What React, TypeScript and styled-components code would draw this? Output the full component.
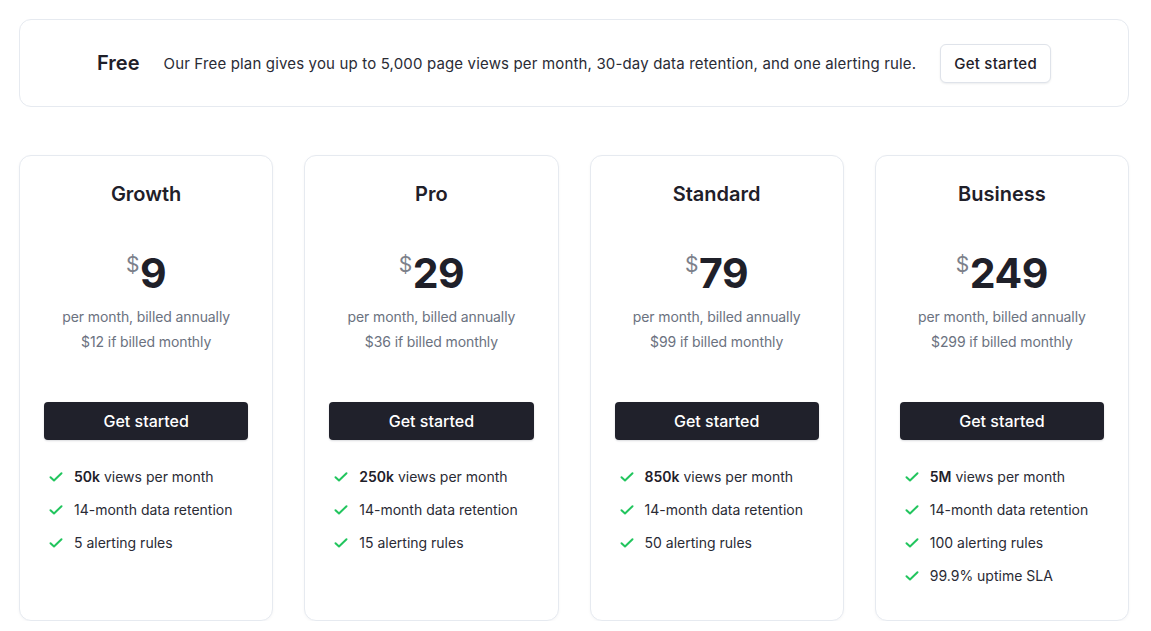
import React from 'react';
import styled, { createGlobalStyle } from 'styled-components';

interface Plan {
  name: string;
  price: number;
  monthly: number;
  views: string;
  rules: number;
  sla?: boolean;
}

const plans: Plan[] = [
  { name: 'Growth', price: 9, monthly: 12, views: '50k', rules: 5 },
  { name: 'Pro', price: 29, monthly: 36, views: '250k', rules: 15 },
  { name: 'Standard', price: 79, monthly: 99, views: '850k', rules: 50 },
  { name: 'Business', price: 249, monthly: 299, views: '5M', rules: 100, sla: true },
];

const GlobalStyle = createGlobalStyle`
  body {
    margin: 0;
    background: #ffffff;
    font-family: Inter, "Noto Sans", "Liberation Sans", sans-serif;
    color: #1f2029;
    -webkit-font-smoothing: antialiased;
  }
  * { box-sizing: border-box; }
`;

function Check() {
  return (
    <CheckIcon width="14" height="14" viewBox="0 0 14 14" fill="none">
      <path d="M1.5 7.2 L5 10.5 L12.5 3.2" stroke="#22c55e" strokeWidth="2" strokeLinecap="round" strokeLinejoin="round" />
    </CheckIcon>
  );
}

export default function App() {
  return (
    <Page>
      <GlobalStyle />
      <Banner>
        <BannerTitle>Free</BannerTitle>
        <BannerText>
          Our Free plan gives you up to 5,000 page views per month, 30-day data retention, and one alerting rule.
        </BannerText>
        <OutlineButton>Get started</OutlineButton>
      </Banner>

      <Grid>
        {plans.map((plan) => (
          <Card key={plan.name}>
            <PlanName>{plan.name}</PlanName>
            <Price>
              <Currency>$</Currency>
              {plan.price}
            </Price>
            <Billing>per month, billed annually</Billing>
            <Billing>${plan.monthly} if billed monthly</Billing>
            <DarkButton>Get started</DarkButton>
            <Features>
              <Feature>
                <Check />
                <span>
                  <strong>{plan.views}</strong> views per month
                </span>
              </Feature>
              <Feature>
                <Check />
                <span>14-month data retention</span>
              </Feature>
              <Feature>
                <Check />
                <span>{plan.rules} alerting rules</span>
              </Feature>
              {plan.sla && (
                <Feature>
                  <Check />
                  <span>99.9% uptime SLA</span>
                </Feature>
              )}
            </Features>
          </Card>
        ))}
      </Grid>
    </Page>
  );
}

const Page = styled.div`
  width: 1110px;
  margin-left: 19px;
  padding-top: 19px;
`;

const Banner = styled.section`
  display: flex;
  align-items: center;
  justify-content: center;
  gap: 24px;
  height: 88px;
  border: 1px solid #e6eaf0;
  border-radius: 12px;
  background: #fff;
`;

const BannerTitle = styled.h2`
  margin: 0;
  font-size: 20px;
  font-weight: 600;
  color: #1f2029;
`;

const BannerText = styled.p`
  margin: 0;
  font-size: 15px;
  letter-spacing: 0.16px;
  color: #2a2b35;
`;

const OutlineButton = styled.button`
  font-family: inherit;
  font-size: 15px;
  letter-spacing: 0.25px;
  font-weight: 500;
  color: #1f2029;
  background: #fff;
  border: 1px solid #dfe3ea;
  border-radius: 6px;
  height: 39px;
  padding: 0 13px;
  box-shadow: 0 1px 2px rgba(15, 23, 42, 0.08);
`;

const Grid = styled.div`
  display: grid;
  grid-template-columns: repeat(4, 1fr);
  gap: 31px;
  margin-top: 48px;
`;

const Card = styled.div`
  display: flex;
  flex-direction: column;
  align-items: center;
  height: 466px;
  padding: 24px 24px 0;
  border: 1px solid #e6eaf0;
  border-radius: 12px;
  background: #fff;
  box-shadow: 0 1px 3px rgba(15, 23, 42, 0.04);
`;

const PlanName = styled.h3`
  margin: 0;
  font-size: 20px;
  line-height: 28px;
  font-weight: 600;
  color: #1f2029;
`;

const Price = styled.div`
  display: flex;
  align-items: flex-start;
  margin-top: 41px;
  font-size: 41px;
  line-height: 48px;
  font-weight: 700;
  color: #1f2029;
  letter-spacing: -0.5px;
`;

const Currency = styled.span`
  font-size: 21px;
  line-height: 32px;
  font-weight: 400;
  color: #7c808a;
  margin-right: 1px;
`;

const Billing = styled.p`
  margin: 0;
  font-size: 14px;
  line-height: 25px;
  letter-spacing: -0.1px;
  color: #6b7280;
  &:first-of-type {
    margin-top: 7px;
  }
`;

const DarkButton = styled.button`
  width: 100%;
  height: 38px;
  margin-top: 48px;
  font-family: inherit;
  font-size: 16px;
  font-weight: 500;
  color: #fff;
  background: #20212b;
  border: none;
  border-radius: 4px;
  box-shadow: 0 1px 2px rgba(15, 23, 42, 0.15);
`;

const Features = styled.ul`
  list-style: none;
  align-self: stretch;
  margin: 27px 0 0;
  padding: 0 0 0 5px;
  display: flex;
  flex-direction: column;
  gap: 13px;
`;

const Feature = styled.li`
  display: flex;
  align-items: center;
  gap: 11px;
  font-size: 14px;
  line-height: 20px;
  color: #2a2b35;
  strong {
    font-weight: 600;
    color: #1f2029;
  }
`;

const CheckIcon = styled.svg`
  flex-shrink: 0;
`;
